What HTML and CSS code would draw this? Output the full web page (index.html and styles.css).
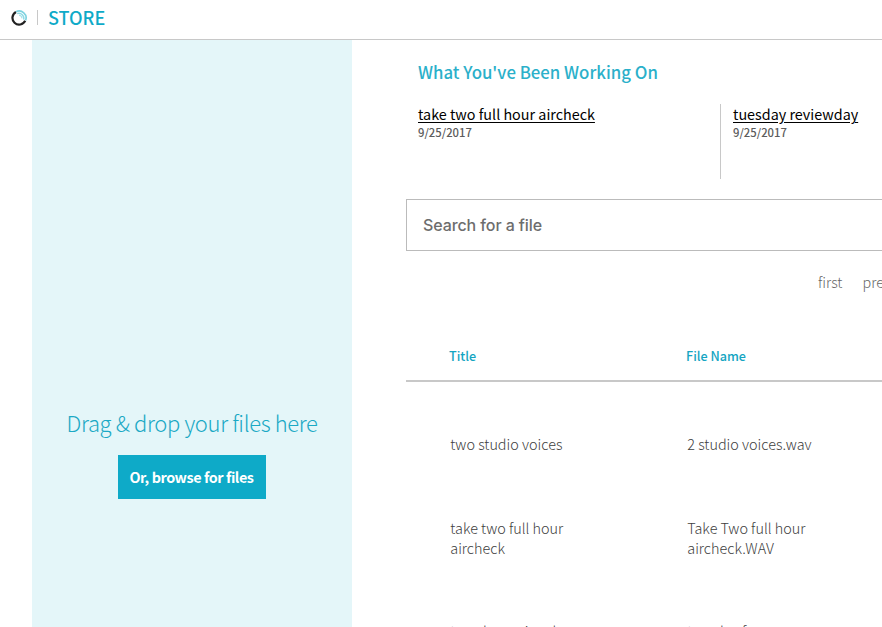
FILE: index.html
```html
<!DOCTYPE html>
<html lang="en">
<head>
<meta charset="utf-8">
<title>Store</title>
<link rel="stylesheet" href="styles.css">
</head>
<body>
<header class="topbar">
  <svg class="logo" viewBox="0 0 16 16" width="16" height="16" fill="none">
    <path d="M5 2A6.7 6.7 0 1 0 14.2 10.8" stroke="#222" stroke-width="2.2"/>
    <path d="M5 1.8A6.9 6.9 0 0 1 14.6 10.4" stroke="#7fd3e0" stroke-width="1.7"/>
    <path d="M6.2 3.6A5 5 0 0 1 12.7 9.6" stroke="#8edbe5" stroke-width="1.4"/>
    <path d="M8 5.2A3.4 3.4 0 0 1 11 8.4" stroke="#a8e2ea" stroke-width="1.2"/>
  </svg>
  <span class="divider"></span>
  <h1 class="brand">STORE</h1>
</header>
<div class="page">
  <aside class="dropzone">
    <p class="drop-hint">Drag &amp; drop your files here</p>
    <button class="browse">Or, browse for files</button>
  </aside>
  <main class="content">
    <h2 class="heading">What You've Been Working On</h2>
    <section class="recent">
      <article class="recent-item"><a class="recent-link" href="#">take two full hour aircheck</a><time class="date">9/25/2017</time></article>
      <article class="recent-item"><a class="recent-link" href="#">tuesday reviewday</a><time class="date">9/25/2017</time></article>
    </section>
    <input class="search" type="text" placeholder="Search for a file">
    <nav class="pager"><span>first</span><span>prev</span></nav>
    <div class="row head"><span>Title</span><span>File Name</span></div>
    <div class="row single"><span>two studio voices</span><span>2 studio voices.wav</span></div>
    <div class="row"><span>take two full hour aircheck</span><span>Take Two full hour aircheck.WAV</span></div>
    <div class="row"><span>tuesday reviewday</span><span>tuesday for review.wav</span></div>
  </main>
</div>
</body>
</html>
```
FILE: styles.css
```css
* { box-sizing: border-box; }
body {
  margin: 0;
  height: 627px;
  overflow: hidden;
  background: #fff;
  color: #5c5c5c;
  font-family: "Noto Sans CJK SC", sans-serif;
}
h1, h2, p { margin: 0; }
.topbar {
  display: flex;
  align-items: center;
  height: 40px;
  padding: 0 0 5px 11px;
  border-bottom: 1px solid #c8c8c8;
}
.logo { margin-top: 1px; }
.divider { width: 1px; height: 15px; margin: 0 10px; background: #c8c8c8; }
.brand { margin-top: -1px; color: #0eaac8; font-size: 18px; font-weight: 500; line-height: 26px; }
.page { display: flex; height: 587px; }
.dropzone {
  flex: none;
  width: 320px;
  margin-left: 32px;
  padding-top: 364px;
  background: #e4f6f9;
  text-align: center;
}
.drop-hint { color: #1ba9c5; font-size: 22px; font-weight: 300; line-height: 36px; letter-spacing: -0.36px; }
.browse {
  display: block;
  width: 148px;
  height: 44px;
  margin: 15px auto 0;
  padding: 0 1px 2px 0;
  border: 0;
  background: #0eaac8;
  color: #fff;
  font-family: inherit;
  font-size: 14.4px;
  font-weight: 700;
  letter-spacing: -0.44px;
}
.content { flex: none; width: 950px; margin-left: 54px; }
.heading { margin: 18px 0 0 12px; color: #2bb0ca; font-size: 16.8px; font-weight: 500; line-height: 28px; }
.recent { display: flex; margin-top: 18px; }
.recent-item { width: 315px; height: 75px; padding: 0 12px; border-right: 1px solid #c8c8c8; }
.recent-link { display: block; color: #000; font-size: 14.35px; line-height: 20px; text-underline-offset: 2px; }
.date { display: block; font-size: 11.3px; font-weight: 500; line-height: 16px; }
.search {
  display: block;
  width: 100%;
  height: 52px;
  margin-top: 20px;
  padding: 0 16px;
  border: 1px solid #bbb;
  font: 500 16px Inter, sans-serif;
  letter-spacing: -0.1px;
}
.search::placeholder { color: #6d6d6d; opacity: 1; }
.pager { display: flex; gap: 20px; padding-left: 412px; margin-top: 20px; color: #666; font-size: 14.4px; font-weight: 300; line-height: 22px; }
.row {
  display: grid;
  grid-template-columns: 130px 130px;
  column-gap: 107px;
  height: 103px;
  padding-left: 44.3px;
  color: #404040;
  font-size: 14.4px;
  font-weight: 300;
  line-height: 20px;
}
.single { height: 84px; }
.head { height: 36px; margin: 53px 0 52px; padding-left: 43px; border-bottom: 2px solid #c8c8c8; color: #14a5c2; font-size: 12.6px; font-weight: 500; }
```
